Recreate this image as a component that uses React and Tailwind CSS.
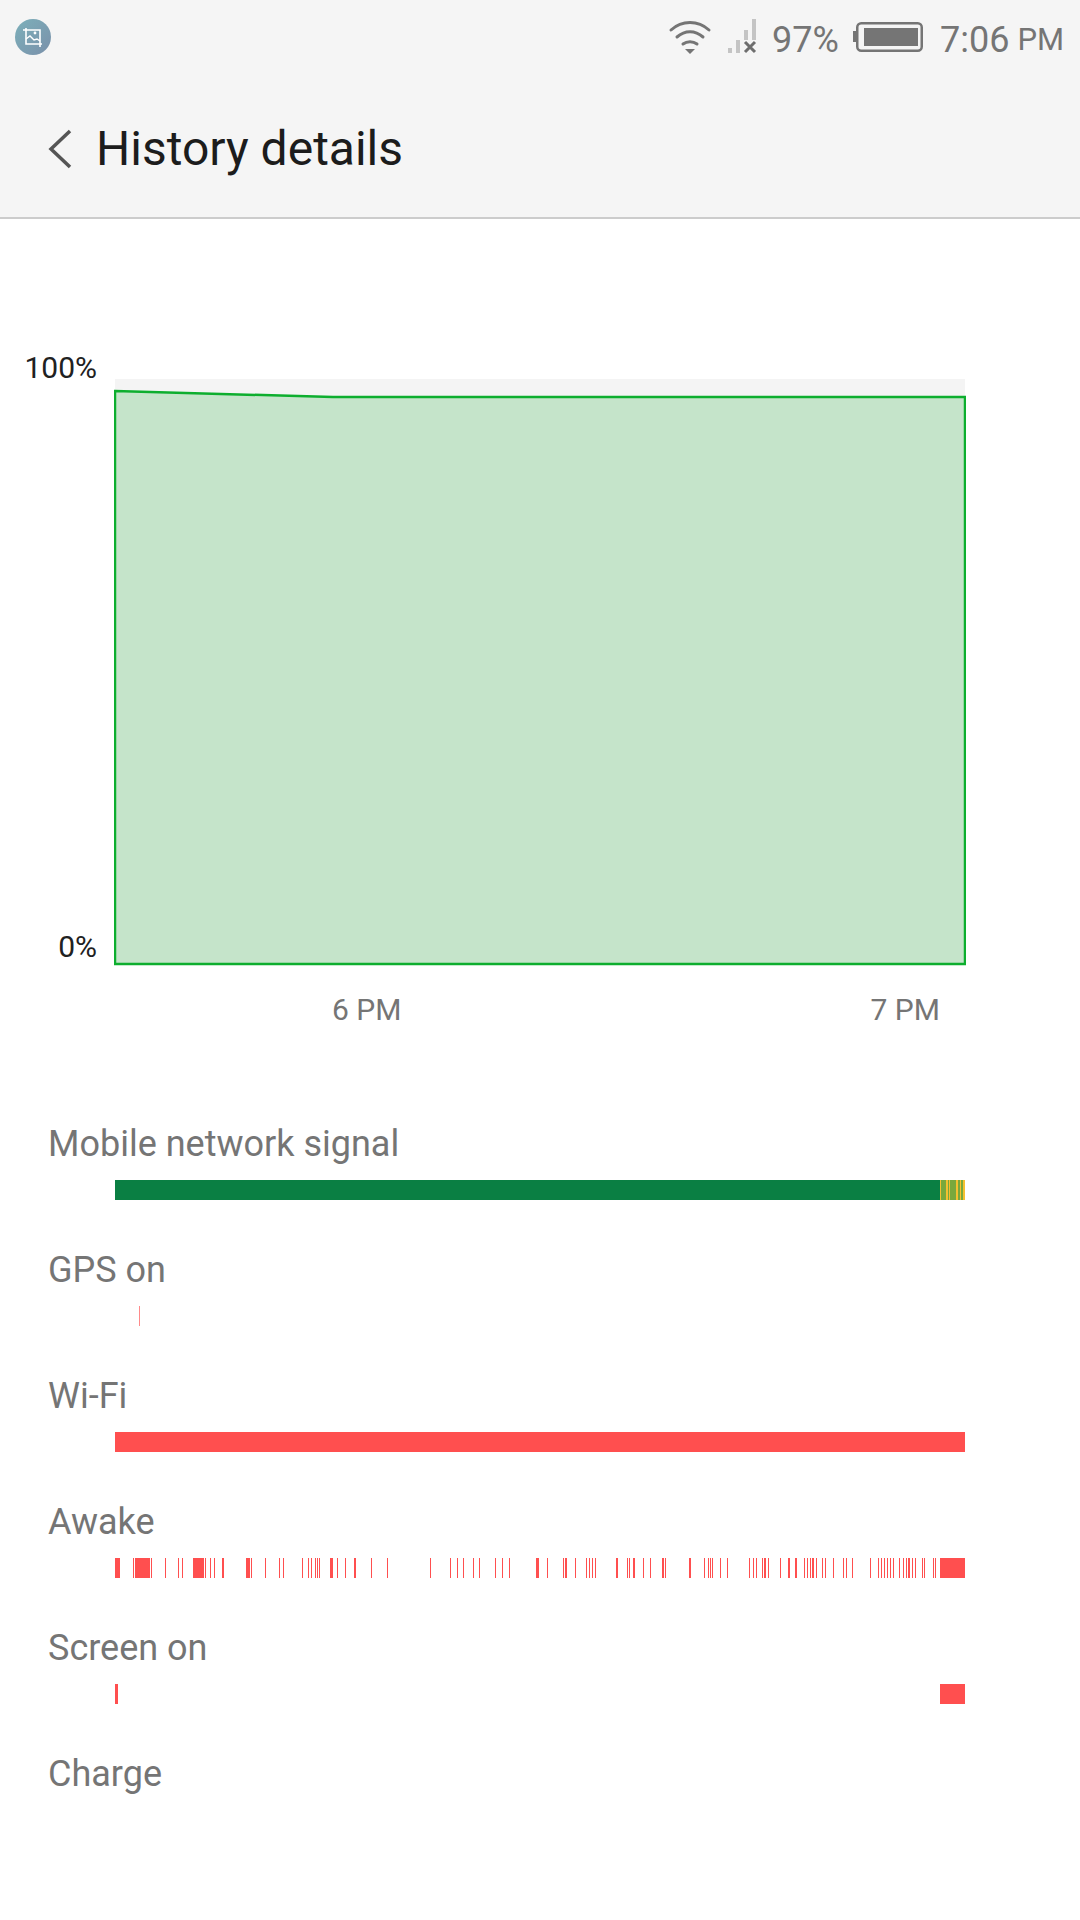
const RED = "#ff4f4f";

const awake = [
  [115, 120], [133, 134], [135, 150], [151, 152], [165, 166], [178, 179], [182, 183], [193, 204], [205, 206],
  [210, 211], [214, 215], [222, 224], [246, 250], [251, 252], [265, 266], [279, 280], [283, 284], [302, 303],
  [308, 309], [311, 312], [315, 316], [317, 318], [319, 320], [330, 333], [337, 338], [345, 346], [354, 356],
  [371, 372], [387, 388], [430, 431], [450, 451], [457, 458], [463, 464], [473, 474], [479, 480], [495, 496],
  [502, 503], [509, 510], [536, 539], [547, 548], [563, 564], [565, 567], [575, 576], [586, 587], [589, 590],
  [592, 593], [595, 596], [616, 618], [627, 628], [629, 630], [633, 635], [643, 644], [650, 651], [662, 664],
  [665, 666], [689, 691], [704, 705], [708, 709], [710, 711], [712, 713], [720, 721], [727, 728], [749, 750],
  [753, 754], [756, 757], [762, 763], [764, 766], [768, 769], [780, 781], [788, 790], [795, 797], [804, 805],
  [807, 808], [810, 811], [812, 814], [816, 817], [822, 823], [825, 826], [833, 834], [843, 844], [846, 847],
  [852, 853], [870, 871], [878, 879], [881, 882], [884, 885], [887, 888], [890, 891], [893, 894], [899, 900],
  [903, 904], [906, 907], [908, 910], [912, 913], [915, 916], [922, 923], [924, 925], [933, 934], [935, 936],
  [940, 965],
];

const signal = [
  [115, 940, "#0a7f43"], [940, 941, "#f5c030"], [941, 946, "#7aa83c"], [946, 948, "#f5c030"],
  [948, 949, "#7aa83c"], [949, 950, "#f5c030"], [950, 956, "#7aa83c"], [956, 958, "#f5c030"],
  [958, 960, "#7aa83c"], [960, 961, "#f5c030"], [961, 963, "#7aa83c"], [963, 965, "#f5c030"],
];

const rows = [
  { label: "Mobile network signal", segments: signal },
  { label: "GPS on", segments: [[139, 140, "#ff8a8a"]] },
  { label: "Wi-Fi", segments: [[115, 965]] },
  { label: "Awake", segments: awake },
  { label: "Screen on", segments: [[115, 118], [940, 965]] },
  { label: "Charge", segments: [] },
];

function WifiIcon() {
  return (
    <svg width="44" height="36" viewBox="0 0 44 36" fill="none" stroke="#757575" strokeWidth="3" strokeLinecap="round">
      <path d="M3 11 C14 1 30 1 41 11" />
      <path d="M9 18 C17 11 27 11 35 18" />
      <path d="M15 25 C19 22 25 22 29 25" />
      <path d="M17 30 H27 L22 35 Z" fill="#757575" stroke="none" />
    </svg>
  );
}

function SignalIcon() {
  return (
    <svg width="32" height="36" viewBox="0 0 32 36">
      <rect x="0" y="29" width="4" height="5" fill="#c4c4c4" />
      <rect x="8" y="21" width="4" height="13" fill="#c4c4c4" />
      <rect x="16" y="11" width="4" height="10" fill="#c4c4c4" />
      <rect x="24" y="0" width="4" height="21" fill="#c4c4c4" />
      <path d="M17 23 L27 33 M27 23 L17 33" stroke="#6e6e6e" strokeWidth="3" />
    </svg>
  );
}

function BatteryIcon() {
  return (
    <svg width="70" height="32" viewBox="0 0 70 32">
      <rect x="0" y="10" width="4" height="11" fill="#757575" />
      <rect x="4.25" y="2.25" width="64.5" height="27.5" rx="4" fill="none" stroke="#757575" strokeWidth="2.5" />
      <rect x="11" y="7" width="54" height="18" fill="#757575" />
    </svg>
  );
}

function AppBadge() {
  return (
    <svg width="36" height="36" viewBox="0 0 36 36">
      <defs>
        <linearGradient id="badge" x1="0" y1="0" x2="1" y2="1">
          <stop offset="0" stopColor="#7cb0ba" />
          <stop offset="1" stopColor="#7a90aa" />
        </linearGradient>
      </defs>
      <circle cx="18" cy="18" r="18" fill="url(#badge)" />
      <path d="M11 9 V25 H27 M8 11 H25 V28" fill="none" stroke="#fff" strokeWidth="1.6" />
      <path d="M11 20 L15 17 L19 21 L22 20 L25 22" fill="none" stroke="#fff" strokeWidth="1.4" />
      <circle cx="20" cy="14" r="1.4" fill="#fff" />
    </svg>
  );
}

function Header() {
  return (
    <div className="h-[219px] bg-[#f5f5f5] border-b-2 border-[#cccccc]">
      <div className="h-[74px] flex items-center pl-[15px] pr-[16px] text-[#757575]">
        <AppBadge />
        <div className="ml-auto flex items-center">
          <WifiIcon />
          <div className="ml-[16px]"><SignalIcon /></div>
          <span className="ml-[12px] text-[36px] pt-[5px]">97%</span>
          <div className="ml-[14px]"><BatteryIcon /></div>
          <span className="ml-[17px] text-[36px] pt-[5px]">7:06</span>
          <span className="ml-[8px] text-[31px] pt-[7px]">PM</span>
        </div>
      </div>
      <div className="flex items-center h-[143px] pt-[7px] pl-[48px]">
        <svg width="24" height="40" viewBox="0 0 24 40" fill="none" stroke="#555555" strokeWidth="3.5">
          <path d="M22 2 L3 20 L22 38" />
        </svg>
        <h1 className="ml-[24px] text-[48px] text-[#1c1c1c]">History details</h1>
      </div>
    </div>
  );
}

function BatteryChart() {
  return (
    <div className="pt-[159px]">
      <div className="flex">
        <div className="w-[97px] h-[586px] flex flex-col justify-between items-end text-[30px] text-[#212121] -mt-[33px]">
          <span>100%</span>
          <span className="-mb-[38px]">0%</span>
        </div>
        <svg width="852" height="588" viewBox="0 0 852 588" className="ml-[17px] shrink-0">
          <rect x="1" y="1" width="850" height="586" fill="#f4f4f4" />
          <path d="M1 13 L219 19 L851 19 V586 H1 Z" fill="#c5e4ca" stroke="#0dae2e" strokeWidth="2.5" />
        </svg>
      </div>
      <div className="flex text-[30px] text-[#757575] mt-[21px]">
        <span className="ml-[332px]">6 PM</span>
        <span className="ml-[469px]">7 PM</span>
      </div>
    </div>
  );
}

function Track({ segments }) {
  return (
    <svg width="850" height="20" viewBox="115 0 850 20" className="block ml-[115px]">
      {segments.map(([start, end, color], i) => (
        <rect key={i} x={start} y="0" width={end - start} height="20" fill={color || RED} />
      ))}
    </svg>
  );
}

export default function App() {
  return (
    <div className="w-[1080px] h-[1920px] bg-white overflow-hidden font-['Roboto',sans-serif]">
      <Header />
      <BatteryChart />
      <div className="mt-[88px] flex flex-col gap-[12px]">
        {rows.map((row) => (
          <div key={row.label} className="h-[114px]">
            <div className="pl-[48px] h-[48px] text-[36px] leading-[48px] text-[#757575]">{row.label}</div>
            <div className="mt-[12px]">
              <Track segments={row.segments} />
            </div>
          </div>
        ))}
      </div>
    </div>
  );
}
